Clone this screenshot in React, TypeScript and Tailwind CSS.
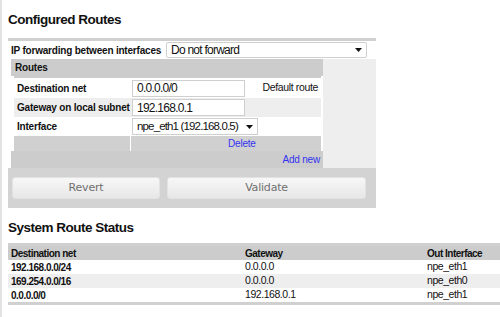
import React from "react";

function Arrow() {
  return (
    <svg width="7" height="4" viewBox="0 0 7 4" className="shrink-0">
      <path d="M0 0h7L3.5 4z" fill="#111" />
    </svg>
  );
}

const label = "text-[10px] font-bold tracking-[-0.2px] text-[#111]";
const value = "text-[12px] tracking-[-0.75px] text-[#111]";
const input = "h-[17px] border border-[#cfcfcf] bg-white flex items-center pl-[4px]";

const routes = [
  { net: "192.168.0.0/24", gw: "0.0.0.0", iface: "npe_eth1" },
  { net: "169.254.0.0/16", gw: "0.0.0.0", iface: "npe_eth0" },
  { net: "0.0.0.0/0", gw: "192.168.0.1", iface: "npe_eth1" },
];

export default function App() {
  return (
    <div className="w-[500px] h-[317px] overflow-hidden bg-white flex font-['Liberation_Sans',Arial,sans-serif]">
      <div className="w-[2px] bg-[#e2e2e2] shrink-0" />
      <div className="flex-1 flex flex-col">
        <h2 className="mt-[12px] ml-[6px] text-[13.5px] leading-[16px] font-bold tracking-[-0.5px] text-[#111]">
          Configured Routes
        </h2>

        <div className="mt-[10px] ml-[6px] w-[368px] border-t-[3px] border-[#d0d0d0]">
          <div className="h-[18px] flex items-center bg-white">
            <div className={`w-[158px] pl-[3px] ${label}`}>IP forwarding between interfaces</div>
            <div className="w-[201px] h-[16px] border border-[#cfcfcf] rounded-[2px] flex items-center justify-between pl-[4px] pr-[4px]">
              <span className={value}>Do not forward</span>
              <Arrow />
            </div>
          </div>

          <div className="flex h-[109px]">
            <div className="w-[3px] bg-white" />
            <div className="w-[312px] flex flex-col">
              <div className="h-[17px] bg-[#cccccc] flex items-center pl-[4px]">
                <span className={label}>Routes</span>
              </div>
              <div className="flex bg-white">
                <div className="w-[3px]" />
                <div className="w-[307px] border-t-2 border-[#cccccc]">
                  <div className="h-[20px] flex items-center bg-white">
                    <div className={`w-[116px] pl-[3px] ${label}`}>Destination net</div>
                    <div className={`ml-[2px] w-[113px] ${input}`}>
                      <span className={value}>0.0.0.0/0</span>
                    </div>
                    <div className="flex-1 text-right pr-[3px] text-[10.5px] tracking-[-0.35px] text-[#111]">Default route</div>
                  </div>
                  <div className="h-[19px] flex items-center bg-[#eeeeee]">
                    <div className={`w-[116px] pl-[3px] ${label}`}>Gateway on local subnet</div>
                    <div className={`ml-[2px] w-[113px] ${input}`}>
                      <span className={value}>192.168.0.1</span>
                    </div>
                  </div>
                  <div className="h-[19px] flex items-center bg-white">
                    <div className={`w-[116px] pl-[3px] ${label}`}>Interface</div>
                    <div className={`ml-[2px] w-[126px] ${input} justify-between pr-[4px]`}>
                      <span className="text-[11.5px] tracking-[-0.85px] text-[#111]">npe_eth1 (192.168.0.5)</span>
                      <Arrow />
                    </div>
                  </div>
                  <div className="h-[15px] flex bg-[#d0d0d0]">
                    <div className="w-[116px]" />
                    <div className="w-px bg-white" />
                    <div className="flex-1 flex items-center pl-[97px]">
                      <span className="text-[10px] tracking-[-0.2px] text-[#3333ee]">Delete</span>
                    </div>
                  </div>
                </div>
                <div className="w-[2px]" />
              </div>
              <div className="h-[17px] bg-[#cccccc] flex items-center justify-end pr-[3px]">
                <span className="text-[10px] tracking-[-0.2px] text-[#3333ee]">Add new</span>
              </div>
            </div>
            <div className="flex-1 bg-[#eeeeee]" />
          </div>

          <div className="h-[40px] bg-[#d3d3d3] flex items-start pt-[9px] pl-[4px] gap-[7px]">
            <button className="w-[148px] h-[22px] rounded-[3px] border border-[#e2e2e2] bg-linear-to-b from-[#f7f7f7] to-[#e7e7e7] text-[11px] text-[#6f6f6f] font-['DejaVu_Sans',sans-serif] tracking-[-0.2px]">
              Revert
            </button>
            <button className="w-[199px] h-[22px] rounded-[3px] border border-[#e2e2e2] bg-linear-to-b from-[#f7f7f7] to-[#e7e7e7] text-[11px] text-[#6f6f6f] font-['DejaVu_Sans',sans-serif] tracking-[-0.2px]">
              Validate
            </button>
          </div>
        </div>

        <h2 className="mt-[12px] ml-[6px] text-[13.5px] leading-[16px] font-bold tracking-[-0.5px] text-[#111]">
          System Route Status
        </h2>

        <div className="mt-[7px] ml-[6px] border-t-[3px] border-b-[3px] border-[#d0d0d0]">
          <div className="h-[14px] flex items-center bg-[#cccccc] text-[10px] font-bold tracking-[-0.5px] text-[#111]">
            <div className="w-[236px] pl-[3px]">Destination net</div>
            <div className="w-[180px] pl-[1px]">Gateway</div>
            <div className="flex-1 pl-[3px]">Out Interface</div>
          </div>
          {routes.map((r, i) => (
            <div
              key={r.net}
              className={`h-[14px] flex items-center text-[#111] ${i % 2 === 1 ? "bg-[#eeeeee]" : "bg-white"}`}
            >
              <div className="w-[236px] pl-[3px] text-[10px] font-bold tracking-[-0.5px]">{r.net}</div>
              <div className="w-[180px] pl-[1px] text-[10.5px] tracking-[-0.45px]">{r.gw}</div>
              <div className="flex-1 pl-[3px] text-[10.5px] tracking-[-0.45px]">{r.iface}</div>
            </div>
          ))}
        </div>
      </div>
    </div>
  );
}
